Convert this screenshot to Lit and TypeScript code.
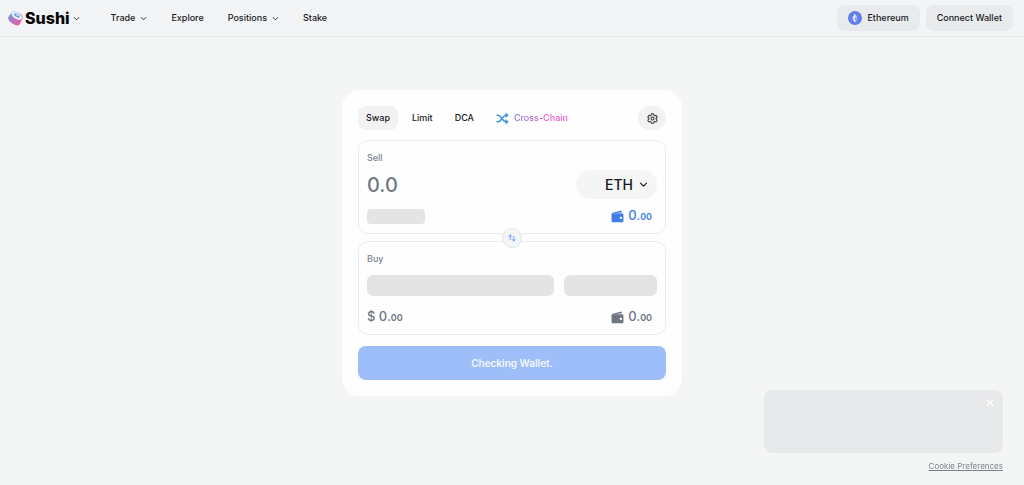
import { LitElement, html, css, svg } from "lit";
import { customElement, property } from "lit/decorators.js";

const chevron = (cls: string) => html`
  <svg class=${cls} viewBox="0 0 24 24" fill="none" stroke="currentColor" stroke-width="3"
    stroke-linecap="round" stroke-linejoin="round" aria-hidden="true"><path d="M4 8.5l8 8 8-8" /></svg>`;

const walletIcon = svg`
  <path d="M1.500 5.600 17.500 1.200c1.300-.3 2.300.4 2.500 1.600l.2 1.400L2 6.900z" />
  <path fill-rule="evenodd" d="M3 6.200h17c1.700 0 3 1.200 3 2.800v10.800c0 1.700-1.300 3-3 3H4c-1.700 0-3-1.300-3-3V7.200zM18.300 12.300a2.200 2.200 0 1 0 0 4.400 2.200 2.200 0 0 0 0-4.400z" />`;

@customElement("wallet-balance")
export class WalletBalance extends LitElement {
  static styles = css`
    :host { display: flex; align-items: center; gap: 4px; padding-right: 5px; }
    .icon { width: 13px; height: 13px; fill: currentColor; }
    .whole { font-size: 13px; line-height: 16px; }
    .cents { font-size: 9px; font-weight: 600; }
  `;
  render() {
    return html`
      <svg class="icon" viewBox="0 0 24 24" aria-hidden="true">${walletIcon}</svg>
      <span class="whole">0.<span class="cents">00</span></span>`;
  }
}

@customElement("token-panel")
export class TokenPanel extends LitElement {
  @property() label = "";
  static styles = css`
    :host {
      display: flex; flex-direction: column; box-sizing: border-box;
      border: 1px solid #ebecee; border-radius: 10px; padding: 9px 8px;
    }
    .label { font-size: 9px; line-height: 16px; color: #7c828f; }
  `;
  render() {
    return html`<span class="label">${this.label}</span><slot></slot>`;
  }
}

@customElement("app-root")
export class AppRoot extends LitElement {
  static styles = css`
    :host {
      display: flex; flex-direction: column; min-height: 100vh; box-sizing: border-box;
      background: #f4f5f5; color: #18191c;
      font-family: Inter, "Liberation Sans", sans-serif; font-size: 9px; line-height: 16px; font-weight: 500;
    }
    * { box-sizing: border-box; }
    button, input { font: inherit; color: inherit; border: 0; margin: 0; padding: 0; background: none; }
    button { cursor: pointer; }
    a { color: inherit; text-decoration: none; }

    .header {
      display: flex; align-items: center; justify-content: space-between;
      height: 37px; padding: 0 11px 0 8px;
      background: #f3f4f6; border-bottom: 1px solid #e8eaee;
    }
    .left, .nav, .actions { display: flex; align-items: center; }
    .left { gap: 31px; }
    .nav { gap: 24px; }
    .actions { gap: 6px; }
    .brand { display: flex; align-items: center; gap: 3px; }
    .logo { display: flex; align-items: center; gap: 2px; }
    .mark { width: 15px; height: 15px; }
    .name { font-size: 16px; line-height: 20px; font-weight: 800; color: #050505; }
    .chev { width: 7px; height: 7px; }
    .menu { display: flex; align-items: center; gap: 5px; }
    .action {
      display: flex; align-items: center; gap: 5px; height: 26px; padding: 0 11px;
      background: #e8eaec; border-radius: 8px;
    }
    .chain { width: 14px; height: 14px; }

    .main { display: flex; justify-content: center; padding: 53px 16px 48px; }
    .card {
      display: flex; flex-direction: column; width: 100%; max-width: 340px;
      padding: 16px; background: #fefefe; border-radius: 18px;
    }
    .tabs { display: flex; align-items: center; gap: 6px; margin-bottom: 10px; }
    .tab { display: flex; align-items: center; gap: 5px; height: 24px; padding: 0 8px; border-radius: 8px; }
    .tab.active { background: #f2f2f2; }
    .shuffle { width: 13px; height: 13px; }
    .rainbow {
      background: linear-gradient(90deg, #8a78dc, #f04fd0 75%);
      background-clip: text; -webkit-background-clip: text; color: transparent;
    }
    .settings {
      display: flex; align-items: center; justify-content: center; margin-left: auto;
      width: 28px; height: 24px; border-radius: 12px; background: #f2f2f2;
    }
    .gear { width: 11px; height: 11px; }

    .panels { display: flex; flex-direction: column; gap: 7px; position: relative; }
    .row { display: flex; align-items: center; justify-content: space-between; gap: 10px; }
    .entry { height: 29px; margin-top: 4px; }
    .totals { height: 16px; margin-top: 9px; }
    .amount { flex: 1; min-width: 0; font-size: 20px; line-height: 28px; outline: none; }
    .amount::placeholder { color: #737984; opacity: 1; }
    .token {
      display: flex; align-items: center; justify-content: flex-end; gap: 6px;
      width: 81px; height: 29px; padding-right: 9px; border-radius: 15px;
      background: #f4f5f5; font-size: 14px;
    }
    .token-chev { width: 9px; height: 9px; }
    .skeleton { background: #e4e4e4; border-radius: 6px; }
    .skeleton.small { width: 58px; height: 15px; border-radius: 4px; }
    .skeleton.large { flex: 2; height: 21px; }
    .skeleton.medium { flex: 1; height: 21px; }
    .blue { color: #417fe6; }
    .gray { color: #6f7582; }
    .usd { font-size: 13px; line-height: 16px; }
    .cents { font-size: 9px; font-weight: 600; }
    .flip {
      position: absolute; left: 50%; top: 50%; transform: translate(-50%, -50%);
      display: flex; align-items: center; justify-content: center;
      width: 20px; height: 20px; border: 1px solid #e3e5e9; border-radius: 50%; background: #f4f5f7;
    }
    .arrows { width: 8px; height: 8px; }
    .submit {
      height: 34px; margin-top: 11px; border-radius: 8px;
      background: #9dbef8; color: #f4f8ff; font-size: 10px; font-weight: 600;
    }

    .notice {
      position: fixed; right: 21px; bottom: 12px;
      display: flex; flex-direction: column; align-items: flex-end; gap: 7px;
    }
    .banner {
      display: flex; justify-content: flex-end; align-items: flex-start;
      width: 239px; height: 63px; padding: 9px; border-radius: 8px; background: #e8e9eb;
    }
    .close { width: 8px; height: 8px; display: flex; color: #fff; }
    .cross-icon { width: 8px; height: 8px; }
    .cookies {
      font-weight: 400; font-size: 8px; line-height: 13px; color: #7b808a; text-decoration: underline;
    }
  `;

  render() {
    return html`
      <header class="header">
        <div class="left">
          <div class="brand">
            <a class="logo" href="#">
              <svg class="mark" viewBox="0 0 30 30" aria-hidden="true">
                <defs>
                  <linearGradient id="side" x1="0" y1="0" x2="0.7" y2="1">
                    <stop offset="0" stop-color="#4b9be4" /><stop offset="0.5" stop-color="#a77fc6" /><stop offset="1" stop-color="#ef5ba6" />
                  </linearGradient>
                </defs>
                <path fill="url(#side)" d="M7 3C10-1 19 1 25 6c4 3 5 6 4 9l-5 11c-2 4-9 4-15-1C2 21-1 16 1 12z" />
                <ellipse cx="17.500" cy="9.500" rx="12" ry="6.500" transform="rotate(31 17.500 9.500)" fill="#e9eef6" />
                <ellipse cx="18" cy="9" rx="6" ry="3.200" transform="rotate(31 18 9)" fill="#5c9ddd" />
                <ellipse cx="18.500" cy="8.500" rx="3" ry="1.400" transform="rotate(31 18.500 8.500)" fill="#e9eef6" />
              </svg>
              <span class="name">Sushi</span>
            </a>
            ${chevron("chev")}
          </div>
          <nav class="nav">
            <button class="menu">Trade ${chevron("chev")}</button>
            <a href="#">Explore</a>
            <button class="menu">Positions ${chevron("chev")}</button>
            <a href="#">Stake</a>
          </nav>
        </div>
        <div class="actions">
          <button class="action">
            <svg class="chain" viewBox="0 0 28 28" aria-hidden="true">
              <circle cx="14" cy="14" r="14" fill="#627eea" />
              <path fill="#fff" fill-opacity=".65" d="M14 5v7l5.500 2.500z" />
              <path fill="#fff" d="M14 5 8.500 14.500 14 12zM14 18.500V23l-5.500-7z" />
              <path fill="#fff" fill-opacity=".3" d="M14 12v5.800l5.500-3.300z" />
              <path fill="#fff" fill-opacity=".8" d="M14 12v5.800l-5.500-3.300z" />
              <path fill="#fff" fill-opacity=".65" d="M14 18.500V23l5.500-7z" />
            </svg>
            Ethereum
          </button>
          <button class="action">Connect Wallet</button>
        </div>
      </header>

      <main class="main">
        <section class="card">
          <div class="tabs">
            <button class="tab active">Swap</button>
            <button class="tab">Limit</button>
            <button class="tab">DCA</button>
            <button class="tab">
              <svg class="shuffle" viewBox="0 0 26 26" fill="none" stroke="#3a96e0" stroke-width="3" aria-hidden="true">
                <path d="M1 6.500h3c3 0 4.500 1.500 6.500 4.500l3 4c2 3 3.500 4.500 6.500 4.500h1M1 19.500h3c3 0 4.500-1.500 6.500-4.500l3-4c2-3 3.500-4.500 6.500-4.500h1" />
                <path fill="#3a96e0" stroke="none" d="M19 1 25.500 6.500 19 12zM19 14l6.500 5.500L19 25z" />
              </svg>
              <span class="rainbow">Cross-Chain</span>
            </button>
            <button class="settings" aria-label="Settings">
              <svg class="gear" viewBox="0 0 24 24" fill="none" stroke="#45474c" stroke-width="2.400" stroke-linejoin="round" aria-hidden="true">
                <path d="M9.600 2h4.800l.7 3.200 1.700 1 3.100-1 2.400 4.100L19.900 11.500v1.900l2.400 2.100-2.400 4.100-3.100-1-1.700 1-.7 2.900H9.600l-.7-2.900-1.700-1-3.100 1-2.400-4.100 2.400-2.100v-1.900L1.700 9.300l2.400-4.100 3.100 1 1.700-1z" />
                <circle cx="12" cy="12.200" r="3.300" />
              </svg>
            </button>
          </div>

          <div class="panels">
            <token-panel label="Sell">
              <div class="row entry">
                <input class="amount" type="text" inputmode="decimal" placeholder="0.0" aria-label="Sell amount" />
                <button class="token">ETH ${chevron("token-chev")}</button>
              </div>
              <div class="row totals">
                <span class="skeleton small"></span>
                <wallet-balance class="blue"></wallet-balance>
              </div>
            </token-panel>
            <token-panel label="Buy">
              <div class="row entry">
                <span class="skeleton large"></span>
                <span class="skeleton medium"></span>
              </div>
              <div class="row totals">
                <span class="usd gray">$ 0.<span class="cents">00</span></span>
                <wallet-balance class="gray"></wallet-balance>
              </div>
            </token-panel>
            <button class="flip" aria-label="Switch tokens">
              <svg class="arrows" viewBox="0 0 16 16" fill="none" stroke="#5c96ea" stroke-width="1.700" stroke-linecap="round" stroke-linejoin="round" aria-hidden="true">
                <path d="M4.500 11V2M1.500 5l3-3 3 3M11.500 5v9M8.500 11l3 3 3-3" />
              </svg>
            </button>
          </div>

          <button class="submit">Checking Wallet.</button>
        </section>
      </main>

      <aside class="notice">
        <div class="banner">
          <button class="close" aria-label="Close">
            <svg class="cross-icon" viewBox="0 0 8 8" stroke="currentColor" stroke-width="1.300" aria-hidden="true"><path d="M1 1l6 6M7 1 1 7" /></svg>
          </button>
        </div>
        <a class="cookies" href="#">Cookie Preferences</a>
      </aside>
    `;
  }
}
